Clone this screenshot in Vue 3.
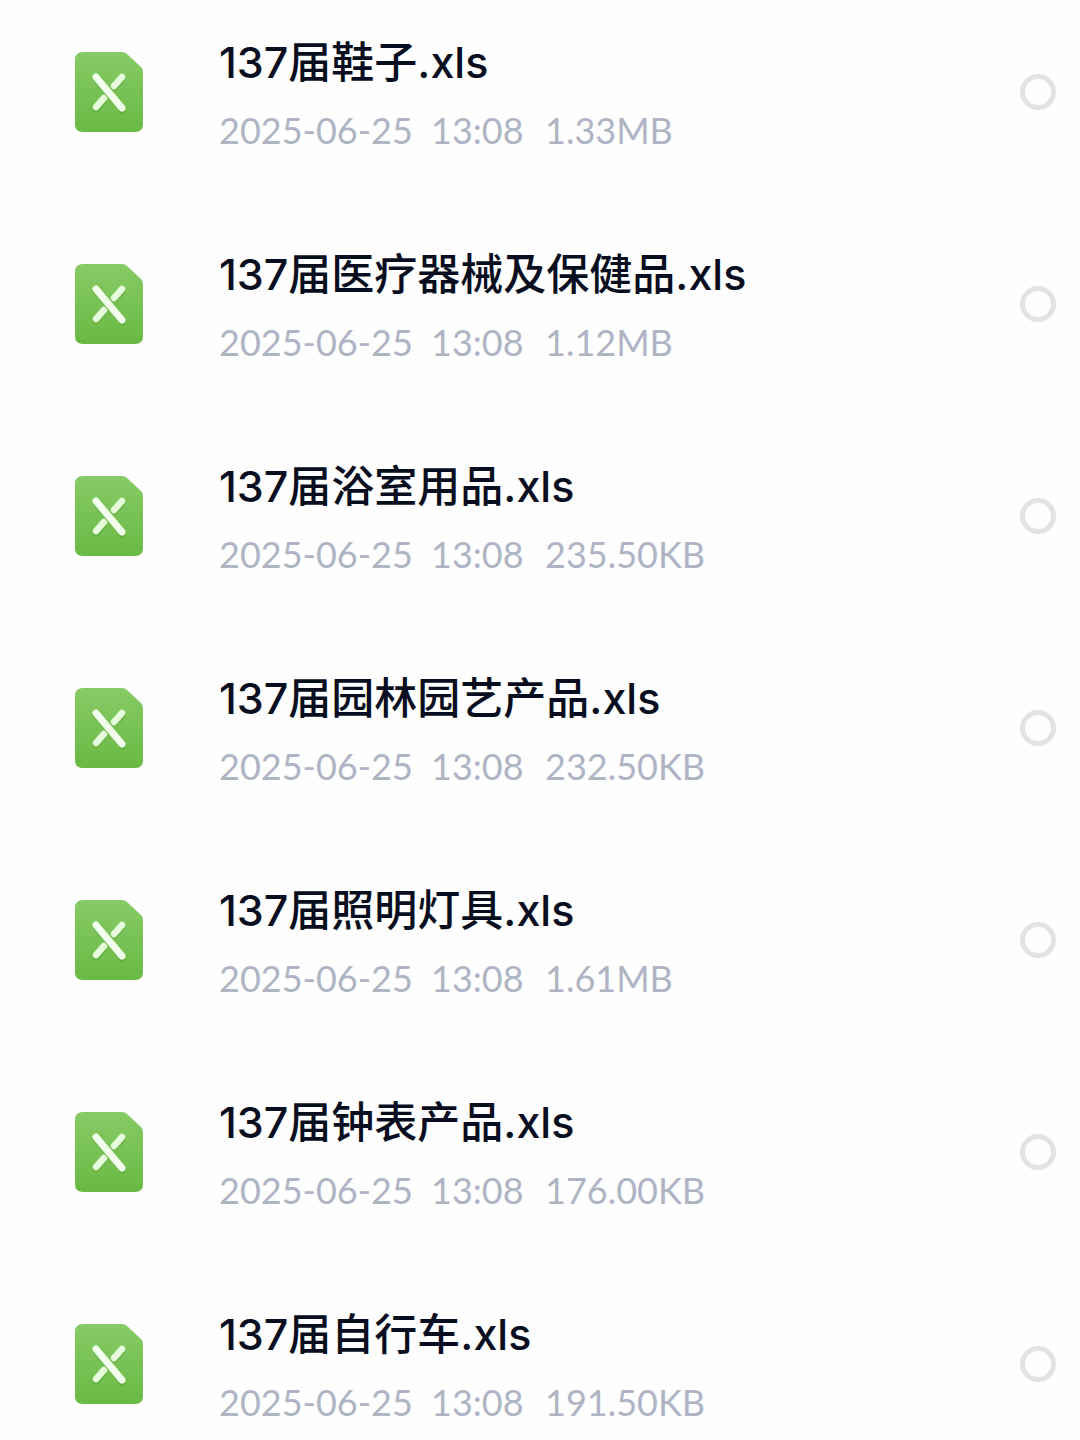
<script setup>
import { ref } from 'vue'

const files = [
  { name: '137届鞋子.xls', size: '1.33MB' },
  { name: '137届医疗器械及保健品.xls', size: '1.12MB' },
  { name: '137届浴室用品.xls', size: '235.50KB' },
  { name: '137届园林园艺产品.xls', size: '232.50KB' },
  { name: '137届照明灯具.xls', size: '1.61MB' },
  { name: '137届钟表产品.xls', size: '176.00KB' },
  { name: '137届自行车.xls', size: '191.50KB' },
]
const selected = ref([])
</script>

<template>
  <ul class="files">
    <li v-for="(file, i) in files" :key="file.name">
      <label class="row" :for="'file-' + i">
        <svg class="icon" viewBox="0 0 68 80" aria-hidden="true">
          <defs>
            <linearGradient :id="'green-' + i" x1="0" y1="0" x2="0" y2="1">
              <stop offset="0" stop-color="#87cb66" />
              <stop offset="1" stop-color="#69b944" />
            </linearGradient>
          </defs>
          <path d="M8 0H47Q50 0 52 2L66 15Q68 17 68 20V72Q68 80 60 80H8Q0 80 0 72V8Q0 0 8 0Z" :fill="'url(#green-' + i + ')'" />
          <g fill="none" stroke-linecap="round">
            <path d="M21 27L47 58M47 27L40 35M28 49L21 57" stroke="#58a337" stroke-width="7" opacity=".5" />
            <path d="M47 25L39 34M29 46L21 55" stroke="#e6fbdc" stroke-width="6.5" />
            <path d="M21 25L47 56" stroke="#74bf50" stroke-width="9" stroke-linecap="butt" />
            <path d="M21 25L47 56" stroke="#f3ffed" stroke-width="7" />
          </g>
        </svg>
        <span class="info">
          <span class="name">{{ file.name }}</span>
          <span class="meta">
            <span class="date">2025-06-25</span>
            <span class="time">13:08</span>
            <span>{{ file.size }}</span>
          </span>
        </span>
        <input :id="'file-' + i" v-model="selected" class="check" type="checkbox" :value="file.name" />
      </label>
    </li>
  </ul>
</template>

<style>
body {
  background: #fefefe;
}
</style>

<style scoped>
.files {
  margin: 0;
  padding: 28px 24px 0 75px;
  list-style: none;
  font-family: Inter, "Noto Sans CJK SC", sans-serif;
}
li {
  padding-bottom: 84px;
}
li:last-child {
  padding-bottom: 0;
}
.row {
  display: flex;
  align-items: center;
  height: 128px;
}
.icon {
  width: 68px;
  height: 80px;
  flex: none;
}
.info {
  display: flex;
  flex: 1;
  flex-direction: column;
  gap: 16px;
  margin-left: 76px;
  padding-top: 8px;
  white-space: nowrap;
}
.name {
  font-size: 43px;
  line-height: 52px;
  font-weight: 500;
  color: #080e20;
}
.meta {
  display: flex;
  font-family: Lato, sans-serif;
  font-size: 36px;
  line-height: 52px;
  color: #afb4c4;
}
.date {
  width: 212px;
}
.time {
  width: 114px;
}
.check {
  appearance: none;
  box-sizing: border-box;
  flex: none;
  width: 36px;
  height: 36px;
  margin: 0;
  border: 5px solid #e3e3e4;
  border-radius: 50%;
}
.check:checked {
  background: #69ba43;
}
</style>
